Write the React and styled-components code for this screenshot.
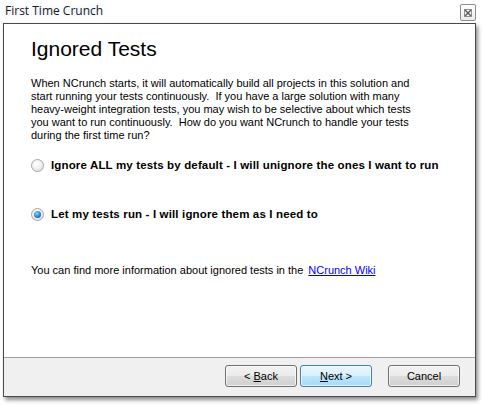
import React from 'react';
import styled, { createGlobalStyle } from 'styled-components';

const GlobalStyle = createGlobalStyle`
  html, body {
    margin: 0;
    padding: 0;
    background: #ffffff;
  }
  body {
    font-family: "Liberation Sans", Arial, sans-serif;
    font-size: 11px;
    color: #000;
  }
`;

const Screen = styled.div`
  width: 485px;
  height: 405px;
  background: #ffffff;
  display: flex;
  flex-direction: column;
  overflow: hidden;
`;

const TitleBar = styled.div`
  height: 23px;
  display: flex;
  align-items: flex-start;
  justify-content: space-between;
  padding: 0 9px 0 5px;
`;

const Caption = styled.div`
  font-family: "Open Sans", "Liberation Sans", sans-serif;
  font-size: 12px;
  line-height: 14px;
  margin-top: 4px;
  color: #1a1a1a;
  text-shadow: 0 0 6px rgba(200, 220, 240, 0.9);
`;

const CloseButton = styled.div`
  width: 14px;
  height: 15px;
  margin-top: 4px;
  border: 1px solid #8c8c8c;
  border-radius: 2px;
  background: linear-gradient(#ffffff, #ececec);
  display: flex;
  align-items: center;
  justify-content: center;
`;

const Dialog = styled.div`
  margin-left: 3px;
  width: 471px;
  height: 372px;
  border: 1px solid #4a4a4a;
  box-shadow: 2px 3px 4px rgba(0, 0, 0, 0.45);
  display: flex;
  flex-direction: column;
`;

const Body = styled.div`
  flex: 1;
  background: #ffffff;
  padding: 11px 20px 0 27px;
  display: flex;
  flex-direction: column;
`;

const Heading = styled.h1`
  margin: 0;
  font-family: "Liberation Sans", Arial, sans-serif;
  font-weight: normal;
  font-size: 21px;
  line-height: 28px;
`;

const Intro = styled.p`
  margin: 14px 0 0;
  width: 380px;
  line-height: 13px;
  font-size: 11px;
`;

const Options = styled.div`
  display: flex;
  flex-direction: column;
  gap: 36px;
  margin-top: 17px;
`;

const Option = styled.label`
  display: flex;
  align-items: center;
  gap: 7px;
  font-weight: bold;
  font-size: 11.5px;
  line-height: 13px;
  letter-spacing: 0.15px;
`;

const Radio = styled.span`
  width: 11px;
  height: 11px;
  border-radius: 50%;
  border: 1px solid #a4a4a4;
  background: radial-gradient(circle at 40% 35%, #ffffff 0%, #f4f4f4 40%, #d6d6d6 100%);
  display: flex;
  align-items: center;
  justify-content: center;
  flex: none;

  &::after {
    content: "";
    display: ${({ checked }) => (checked ? 'block' : 'none')};
    width: 7px;
    height: 7px;
    border-radius: 50%;
    background: radial-gradient(circle at 40% 35%, #8fd8f8 0%, #2386cc 55%, #0b3f73 100%);
  }
`;

const Info = styled.div`
  margin-top: 43px;
  line-height: 13px;
`;

const WikiLink = styled.a`
  color: #0000ff;
  text-decoration: underline;
  margin-left: 5px;
`;

const Footer = styled.div`
  height: 39px;
  border-top: 1px solid #a0a0a0;
  background: #f0f0f0;
  display: flex;
  justify-content: flex-end;
  align-items: flex-start;
  padding: 7px 15px 0 0;
  box-sizing: border-box;
`;

const Button = styled.button`
  width: 72px;
  height: 22px;
  margin-left: ${({ gap }) => gap}px;
  border-radius: 3px;
  font-family: "Liberation Sans", Arial, sans-serif;
  font-size: 11px;
  color: #000;
  padding: 0;
  border: 1px solid ${({ primary }) => (primary ? '#3c7fb1' : '#707070')};
  background: ${({ primary }) =>
    primary
      ? 'linear-gradient(#eaf6fd 0%, #d9f0fc 50%, #bee6fd 50%, #a7d9f5 100%)'
      : 'linear-gradient(#f2f2f2 0%, #ebebeb 50%, #dddddd 50%, #cfcfcf 100%)'};
  box-shadow: inset 0 0 0 1px rgba(255, 255, 255, 0.7);

  u {
    text-decoration: underline;
  }
`;

const App = () => (
  <>
    <GlobalStyle />
    <Screen>
      <TitleBar>
        <Caption>First Time Crunch</Caption>
        <CloseButton>
          <svg width="8" height="8" viewBox="0 0 8 8">
            <path d="M1 1 L7 7 M7 1 L1 7" stroke="#555" strokeWidth="1.4" />
            <rect x="0.5" y="0.5" width="7" height="7" fill="none" stroke="#777" strokeWidth="0.8" />
          </svg>
        </CloseButton>
      </TitleBar>
      <Dialog>
        <Body>
          <Heading>Ignored Tests</Heading>
          <Intro>
            When NCrunch starts, it will automatically build all projects in this solution and
            start running your tests continuously.&nbsp; If you have a large solution with many
            heavy-weight integration tests, you may wish to be selective about which tests
            you want to run continuously.&nbsp; How do you want NCrunch to handle your tests
            during the first time run?
          </Intro>
          <Options>
            <Option>
              <Radio />
              Ignore ALL my tests by default - I will unignore the ones I want to run
            </Option>
            <Option>
              <Radio checked />
              Let my tests run - I will ignore them as I need to
            </Option>
          </Options>
          <Info>
            You can find more information about ignored tests in the
            <WikiLink href="#">NCrunch Wiki</WikiLink>
          </Info>
        </Body>
        <Footer>
          <Button gap={0}>
            &lt; <u>B</u>ack
          </Button>
          <Button gap={3} primary>
            <u>N</u>ext &gt;
          </Button>
          <Button gap={16}>Cancel</Button>
        </Footer>
      </Dialog>
    </Screen>
  </>
);

export default App;
